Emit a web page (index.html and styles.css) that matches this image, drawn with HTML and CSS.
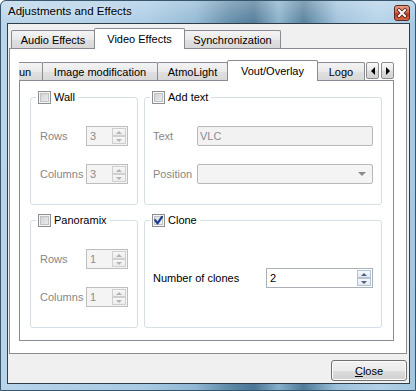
FILE: index.html
```html
<!DOCTYPE html>
<html>
<head>
<meta charset="utf-8">
<link rel="stylesheet" href="styles.css">
</head>
<body>
<div class="window">
  <div class="titlebar">
    <span class="title">Adjustments and Effects</span>
    <span class="xbtn"><svg width="14" height="14" viewBox="0 0 14 14">
      <path d="M4 4 L10 10 M10 4 L4 10" stroke="#4a1d14" stroke-width="3.6" stroke-linecap="square"/>
      <path d="M4 4 L10 10 M10 4 L4 10" stroke="#ffffff" stroke-width="2" stroke-linecap="square"/>
    </svg></span>
  </div>
  <div class="client">
    <div class="tabbar outer-tabs">
      <div class="tab w-audio">Audio Effects</div>
      <div class="tab active w-video">Video Effects</div>
      <div class="tab w-sync">Synchronization</div>
    </div>
    <div class="pane outer-pane">
      <div class="tabbar inner-tabs">
        <div class="tab clipped w-un">un</div>
        <div class="tab w-image">Image modification</div>
        <div class="tab w-atmo">AtmoLight</div>
        <div class="tab active w-vout">Vout/Overlay</div>
        <div class="tab w-logo">Logo</div>
        <div class="scroll-btn left"></div>
        <div class="scroll-btn right"></div>
      </div>
      <div class="pane inner-pane">
        <div class="groups">
          <fieldset class="group">
            <legend><span class="cb"></span><span>Wall</span></legend>
            <div class="body body-small">
              <span class="lbl dis">Rows</span>
              <div class="spin dis"><span class="val">3</span><span class="btns"><span class="up"></span><span class="dn"></span></span></div>
              <span class="lbl dis">Columns</span>
              <div class="spin dis"><span class="val">3</span><span class="btns"><span class="up"></span><span class="dn"></span></span></div>
            </div>
          </fieldset>
          <fieldset class="group">
            <legend><span class="cb"></span><span>Add text</span></legend>
            <div class="body body-text">
              <span class="lbl dis">Text</span>
              <div class="field dis">VLC</div>
              <span class="lbl dis">Position</span>
              <div class="combo dis"></div>
            </div>
          </fieldset>
          <fieldset class="group">
            <legend><span class="cb"></span><span>Panoramix</span></legend>
            <div class="body body-small">
              <span class="lbl dis">Rows</span>
              <div class="spin dis"><span class="val">1</span><span class="btns"><span class="up"></span><span class="dn"></span></span></div>
              <span class="lbl dis">Columns</span>
              <div class="spin dis"><span class="val">1</span><span class="btns"><span class="up"></span><span class="dn"></span></span></div>
            </div>
          </fieldset>
          <fieldset class="group">
            <legend><span class="cb checked"><svg width="13" height="13" viewBox="0 0 13 13"><path d="M3.2 6.2 L5.5 9.4 L10 2.8" fill="none" stroke="#1d3c8e" stroke-width="2.2" stroke-linecap="round" stroke-linejoin="round"/></svg></span><span>Clone</span></legend>
            <div class="body body-clone">
              <span class="lbl">Number of clones</span>
              <div class="spin en"><span class="val">2</span><span class="btns"><span class="up"></span><span class="dn"></span></span></div>
            </div>
          </fieldset>
        </div>
      </div>
    </div>
    <div class="footer">
      <button class="btn"><span class="u">C</span>lose</button>
    </div>
  </div>
</div>
</body>
</html>
```
FILE: styles.css
```css
* { box-sizing: border-box; }
html, body { margin: 0; padding: 0; }
body {
  width: 416px;
  height: 391px;
  overflow: hidden;
  background: #ffffff;
  font-family: "Liberation Sans", Arial, sans-serif;
  font-size: 11px;
  color: #000;
}

.window {
  width: 416px;
  height: 391px;
  display: flex;
  flex-direction: column;
  padding: 0 6px 7px 7px;
  border: 0;
  border-radius: 6px 6px 0 0;
  outline: 1px solid #37566e;
  outline-offset: -1px;
  background-color: #8fb6d3;
  background-image:
    linear-gradient(180deg, rgba(255,255,255,0.3) 0, rgba(255,255,255,0.06) 23px, rgba(255,255,255,0) 100%),
    linear-gradient(90deg, #b7d4ea 0%, #a8cae4 35%, #8fb6d3 47%, #5e89a7 55%, #4a7594 61%, #86aec9 67%, #4f7b99 73%, #9cc0da 81%, #b3d1e8 91%, #a3c6e1 100%);
}

.titlebar {
  height: 23px;
  flex: none;
  display: flex;
  justify-content: space-between;
  align-items: flex-start;
  padding-left: 1px;
}
.title {
  font-size: 11.5px;
  line-height: 23px;
  color: #000;
  text-shadow: 0 0 6px rgba(255,255,255,0.85);
}
.xbtn {
  margin-top: 5px;
  width: 16px;
  height: 16px;
  display: flex;
  align-items: center;
  justify-content: center;
  border: 1px solid #5b2a1f;
  border-radius: 3px;
  background-color: #c8472b;
  background-image: linear-gradient(#eba08b 0%, #d86a4f 45%, #bc3a1e 55%, #d4694b 100%);
}
.xbtn svg { display: block; }

.client {
  flex: 1;
  display: flex;
  flex-direction: column;
  border: 1px solid #2f3d49;
  background: #f0f0f0;
  padding: 0 2px 0 1px;
}

/* tabs */
.tabbar {
  display: flex;
  align-items: flex-end;
  flex: none;
}
.outer-tabs { height: 24px; padding-left: 2px; }
.inner-tabs { height: 20px; }

.tab {
  height: 18px;
  border: 1px solid #898c95;
  border-bottom: 0;
  border-radius: 2px 2px 0 0;
  margin-left: -1px;
  background: linear-gradient(#f4f4f4, #e9e9e9 50%, #e0e0e0 51%, #d8d8d8);
  display: flex;
  align-items: center;
  justify-content: center;
  white-space: nowrap;
  overflow: hidden;
  padding-top: 1px;
}
.tab:first-child { margin-left: 0; }
.tab.active {
  height: 21px;
  margin-bottom: -1px;
  background: #ffffff;
  position: relative;
  z-index: 1;
  padding-top: 0;
  padding-bottom: 1px;
}
.tab.clipped {
  border-left: 0;
  border-radius: 0 2px 0 0;
  justify-content: flex-start;
  padding-left: 0;
}

.w-audio { width: 84px; }
.w-video { width: 91px; }
.w-sync { width: 97px; }
.w-un { width: 24px; }
.w-image { width: 116px; }
.w-atmo { width: 71px; }
.w-vout { width: 91px; }
.w-logo { width: 48px; }

.scroll-btn {
  width: 13px;
  height: 17px;
  margin-bottom: 1px;
  margin-left: 1px;
  border: 1px solid #8d8d8d;
  border-radius: 2px;
  background: linear-gradient(#f8f8f8, #e8e8e8 50%, #dcdcdc 51%, #d4d4d4);
  display: flex;
  align-items: center;
  justify-content: center;
}
.scroll-btn.right { margin-left: 2px; }
.scroll-btn.left::after {
  content: "";
  border-top: 4px solid transparent;
  border-bottom: 4px solid transparent;
  border-right: 4px solid #000;
}
.scroll-btn.right::after {
  content: "";
  border-top: 4px solid transparent;
  border-bottom: 4px solid transparent;
  border-left: 4px solid #000;
}

/* panes */
.pane {
  border: 1px solid #898c95;
  background: #ffffff;
}
.outer-pane {
  height: 306px;
  flex: none;
  display: flex;
  flex-direction: column;
  padding: 11px 12px 12px 9px;
}
.inner-pane {
  flex: 1;
  padding: 9px 11px 12px 10px;
}

.groups {
  display: grid;
  grid-template-columns: 108px 238px;
  grid-template-rows: 115px 115px;
  column-gap: 6px;
  row-gap: 8px;
}

fieldset.group {
  margin: 0;
  padding: 0;
  min-width: 0;
  border: 1px solid #d5dfe5;
  border-radius: 3px;
}
fieldset.group legend {
  margin-left: 5px;
  padding: 0 3px 0 2px;
  height: 14px;
  display: flex;
  align-items: center;
  gap: 3px;
  color: #000;
}

.cb {
  width: 13px;
  height: 13px;
  flex: none;
  display: block;
  border: 1px solid #8e8f8f;
  background: linear-gradient(135deg, #c9cbce, #f3f3f3);
  box-shadow: inset 0 0 0 1px #f6f6f6, inset 0 0 0 2px #bfc2c6;
  position: relative;
}
.cb.checked {
  background: linear-gradient(135deg, #d3d9e3, #f6f7f9);
}
.cb svg {
  position: absolute;
  left: -1px;
  top: -1px;
}

.body {
  display: grid;
  align-items: center;
  row-gap: 18px;
}
.body-small {
  grid-template-columns: 46px 42px;
  padding: 22px 0 0 9px;
}
.body-text {
  grid-template-columns: 44px 176px;
  padding: 22px 0 0 8px;
}
.body-clone {
  grid-template-columns: 113px 107px;
  padding: 41px 0 0 8px;
}

.lbl { white-space: nowrap; }
.lbl.dis { color: #878787; }

.spin {
  height: 20px;
  display: flex;
  border: 1px solid #b5b9bf;
}
.spin .val {
  flex: 1;
  padding-left: 3px;
  line-height: 18px;
}
.spin .btns {
  width: 16px;
  display: flex;
  flex-direction: column;
  padding: 1px;
}
.spin .btns span {
  flex: 1;
  border: 1px solid;
  display: flex;
  align-items: center;
  justify-content: center;
}
.spin .btns .up::after {
  content: "";
  border-left: 3px solid transparent;
  border-right: 3px solid transparent;
  border-bottom: 3px solid;
}
.spin .btns .dn::after {
  content: "";
  border-left: 3px solid transparent;
  border-right: 3px solid transparent;
  border-top: 3px solid;
}
.spin.dis {
  background: #f4f4f4;
  border-color: #bdbdbd;
  color: #8c8c8c;
}
.spin.dis .btns span {
  border-color: #cfcfcf;
  background: linear-gradient(#f7f7f7, #ececec);
  color: #b3b3b3;
}
.spin.en {
  background: #ffffff;
  border-color: #abb0b6;
  color: #000;
}
.spin.en .btns span {
  border-color: #b3c3d4;
  background: linear-gradient(#f7f9fc, #e3e9f0);
  color: #4b5f80;
}

.field {
  height: 20px;
  border: 1px solid #b8b8b8;
  border-radius: 2px;
  background: #f2f2f2;
  padding-left: 2px;
  line-height: 18px;
  color: #8c8c8c;
}
.combo {
  height: 20px;
  border: 1px solid #b8b8b8;
  border-radius: 2px;
  background: #f4f4f4;
  display: flex;
  align-items: center;
  justify-content: flex-end;
  padding-right: 6px;
}
.combo::after {
  content: "";
  border-left: 4px solid transparent;
  border-right: 4px solid transparent;
  border-top: 4px solid #8a8a8a;
}

.footer {
  flex: 1;
  display: flex;
  justify-content: flex-end;
  align-items: flex-start;
  padding-top: 6px;
}
.btn {
  width: 76px;
  height: 21px;
  margin: 0;
  padding: 0;
  border: 1px solid #707070;
  border-radius: 3px;
  background: linear-gradient(#f2f2f2, #ebebeb 50%, #dddddd 51%, #cfcfcf);
  box-shadow: inset 0 0 0 1px #fbfbfb;
  font-family: "Liberation Sans", Arial, sans-serif;
  font-size: 11px;
  color: #000;
}
.btn .u { text-decoration: underline; }
```
